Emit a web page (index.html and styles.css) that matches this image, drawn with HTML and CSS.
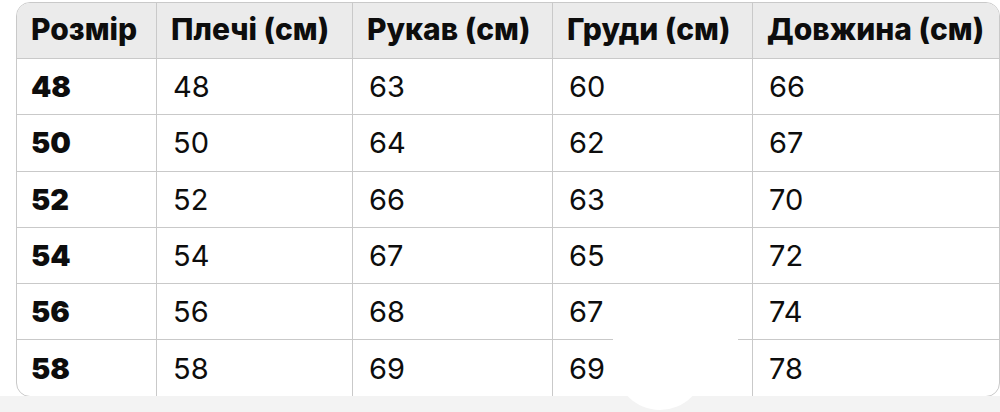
FILE: index.html
```html
<!DOCTYPE html>
<html lang="uk">
<head>
<meta charset="utf-8">
<link rel="stylesheet" href="styles.css">
</head>
<body>
<div class="page">
  <div class="sheet">
    <table class="sizes">
      <colgroup>
        <col class="c1"><col class="c2"><col class="c3"><col class="c4"><col class="c5">
      </colgroup>
      <thead>
        <tr><th>Розмір</th><th>Плечі (см)</th><th>Рукав (см)</th><th>Груди (см)</th><th>Довжина (см)</th></tr>
      </thead>
      <tbody>
        <tr><td class="size">48</td><td>48</td><td>63</td><td>60</td><td>66</td></tr>
        <tr><td class="size">50</td><td>50</td><td>64</td><td>62</td><td>67</td></tr>
        <tr><td class="size">52</td><td>52</td><td>66</td><td>63</td><td>70</td></tr>
        <tr><td class="size">54</td><td>54</td><td>67</td><td>65</td><td>72</td></tr>
        <tr><td class="size">56</td><td>56</td><td>68</td><td>67</td><td>74</td></tr>
        <tr><td class="size">58</td><td>58</td><td>69</td><td>69</td><td>78</td></tr>
      </tbody>
    </table>
  </div>
  <div class="strip"></div>
  <div class="blot"></div>
  <div class="blot-round"></div>
</div>
</body>
</html>
```
FILE: styles.css
```css
html, body {
  margin: 0;
  padding: 0;
  background: #ffffff;
}
.page {
  position: relative;
  width: 1000px;
  height: 412px;
  overflow: hidden;
  font-family: Inter, "Noto Sans", "Liberation Sans", sans-serif;
  color: #0d0d0d;
}
.sheet {
  background: #ffffff;
  padding: 2px 0 0 16px;
  height: 394px;
}
.strip {
  height: 16px;
  background: #f3f3f3;
}
.sizes {
  width: 984px;
  table-layout: fixed;
  border-collapse: separate;
  border-spacing: 0;
  border: 1px solid #c9c9c9;
  border-radius: 14px;
  overflow: hidden;
}
.c1 { width: 140px; }
.c2 { width: 196px; }
.c3 { width: 200px; }
.c4 { width: 200px; }
.c5 { width: auto; }
.sizes th,
.sizes td {
  text-align: left;
  padding: 0 0 0 16px;
  border-right: 1px solid #c9c9c9;
  border-bottom: 1px solid #c9c9c9;
  white-space: nowrap;
}
.sizes th:last-child,
.sizes td:last-child {
  border-right: none;
}
.sizes tbody tr:last-child td {
  border-bottom: none;
}
.sizes th {
  background: #ebebeb;
  height: 51px;
  padding: 0 0 4px 14px;
  font-size: 30px;
  font-weight: 800;
  letter-spacing: 0;
}
.sizes td {
  height: 55.3px;
  font-size: 29px;
  font-weight: 400;
}
.sizes td.size {
  padding-left: 14px;
  font-weight: 900;
}
.blot {
  position: absolute;
  left: 613px;
  top: 318px;
  width: 125px;
  height: 77px;
  background: #ffffff;
}
.blot-round {
  position: absolute;
  left: 615px;
  top: 320px;
  width: 90px;
  height: 90px;
  border-radius: 50%;
  background: #ffffff;
}
```
